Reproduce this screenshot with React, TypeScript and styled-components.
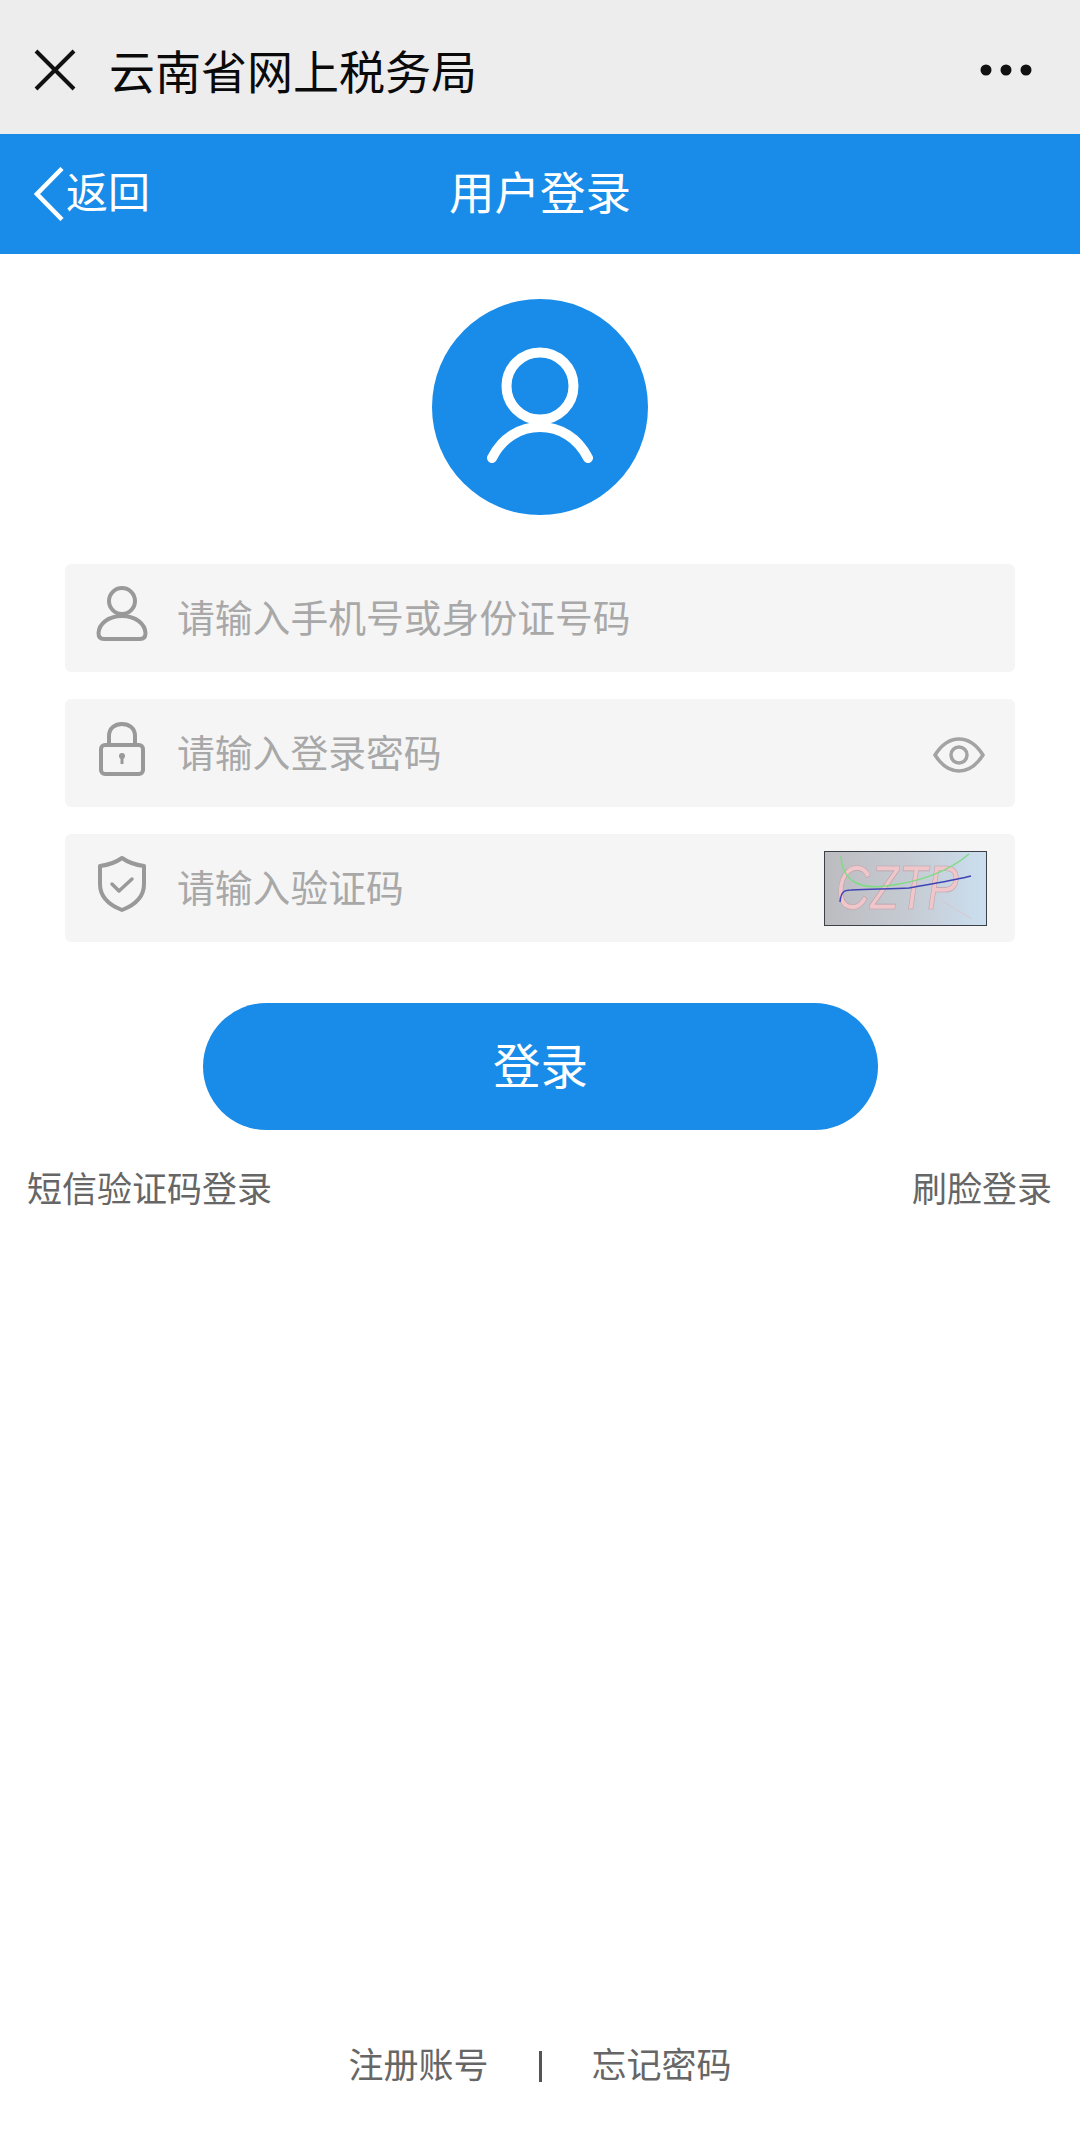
import React from "react";
import styled, { createGlobalStyle } from "styled-components";

const BLUE = "#188ce8";
const CJK = `"Noto Sans CJK SC", "Noto Sans", sans-serif`;

const GlobalStyle = createGlobalStyle`
  html, body {
    margin: 0;
    padding: 0;
    background: #fff;
    font-family: ${CJK};
  }
  * {
    box-sizing: border-box;
  }
`;

const Page = styled.div`
  width: 1080px;
  height: 2140px;
  display: flex;
  flex-direction: column;
  background: #fff;
`;

// ------------------------------ wechat bar ------------------------------
const WechatBar = styled.div`
  height: 134px;
  flex: none;
  background: #ededed;
  display: flex;
  align-items: center;
  padding: 6px 48px 0 34px;
  color: #0a0a0a;
`;

const WechatTitle = styled.div`
  flex: 1;
  margin-left: 33px;
  padding-bottom: 2px;
  font-size: 46px;
  line-height: 60px;
  font-weight: 400;
  white-space: nowrap;
`;

// ------------------------------ blue nav ------------------------------
const NavBar = styled.div`
  height: 120px;
  flex: none;
  background: ${BLUE};
  color: #fff;
  display: grid;
  grid-template-columns: 1fr auto 1fr;
  align-items: center;
  padding: 0 34px;
`;

const BackLink = styled.div`
  display: flex;
  align-items: center;
`;

const BackText = styled.span`
  margin-left: 2px;
  padding-bottom: 8px;
  font-size: 42px;
  line-height: 60px;
`;

const NavTitle = styled.div`
  padding-bottom: 8px;
  font-size: 45.5px;
  line-height: 60px;
`;

// ------------------------------ form ------------------------------
const Avatar = styled.div`
  width: 216px;
  height: 216px;
  margin: 45px auto 0;
  flex: none;
  border-radius: 50%;
  background: ${BLUE};
  display: flex;
  align-items: center;
  justify-content: center;
`;

const Form = styled.div`
  margin: 49px 65px 0;
  display: flex;
  flex-direction: column;
  gap: 27px;
`;

const Field = styled.div`
  height: 108px;
  display: flex;
  align-items: center;
  background: #f5f5f5;
  border-radius: 6px;
  padding: 0 28px 0 30px;
`;

const FieldIcon = styled.div`
  width: 54px;
  height: 68px;
  padding-bottom: 8px;
  flex: none;
  display: flex;
  align-items: center;
  justify-content: center;
`;

const Placeholder = styled.div`
  flex: 1;
  margin-left: 28px;
  padding-bottom: 5px;
  font-size: 37.8px;
  line-height: 50px;
  color: #a8a8a8;
  white-space: nowrap;
`;

const EyeIcon = styled.svg`
  flex: none;
  margin: 4px 2px 0 0;
`;

const Captcha = styled.svg`
  display: block;
  flex: none;
  width: 163px;
  height: 75px;
`;

const LoginButton = styled.div`
  width: 675px;
  height: 127px;
  margin: 61px 0 0 203px;
  padding-bottom: 6px;
  flex: none;
  border-radius: 64px;
  background: ${BLUE};
  color: #fff;
  font-size: 47.5px;
  display: flex;
  align-items: center;
  justify-content: center;
`;

const AltRow = styled.div`
  display: flex;
  justify-content: space-between;
  padding: 32px 28px 0 27px;
  font-size: 35px;
  line-height: 50px;
  color: #666;
`;

const Footer = styled.div`
  margin-top: auto;
  margin-bottom: 52px;
  display: flex;
  justify-content: center;
  align-items: center;
  font-size: 35px;
  line-height: 50px;
  color: #666;
`;

const Divider = styled.span`
  width: 3px;
  height: 31px;
  margin: 7px 50px 0 50px;
  background: #555;
`;

const App: React.FC = () => (
  <Page>
    <GlobalStyle />
    <WechatBar>
      <svg width="42" height="42" viewBox="0 0 42 42" fill="none" stroke="#111" strokeWidth="4">
        <path d="M2 2 L40 40 M40 2 L2 40" />
      </svg>
      <WechatTitle>云南省网上税务局</WechatTitle>
      <svg width="52" height="12" viewBox="0 0 52 12" fill="#111">
        <circle cx="6" cy="6" r="5.5" />
        <circle cx="26" cy="6" r="5.5" />
        <circle cx="46" cy="6" r="5.5" />
      </svg>
    </WechatBar>

    <NavBar>
      <BackLink>
        <svg width="30" height="54" viewBox="0 0 30 54" fill="none" stroke="#fff" strokeWidth="4.5">
          <path d="M28 1.500 L3 27 L28 52.500" />
        </svg>
        <BackText>返回</BackText>
      </BackLink>
      <NavTitle>用户登录</NavTitle>
      <div />
    </NavBar>

    <Avatar>
      <svg width="112" height="122" viewBox="0 0 112 122" fill="none" stroke="#fff" strokeWidth="10" strokeLinecap="round">
        <circle cx="56" cy="40" r="33.5" />
        <path d="M8 112 C18 92 36 81 56 81 C76 81 94 92 104 112" />
      </svg>
    </Avatar>

    <Form>
      <Field>
        <FieldIcon>
          <svg width="52" height="56" viewBox="0 0 52 56" fill="none" stroke="#999" strokeWidth="4">
            <circle cx="26" cy="15" r="13" />
            <path d="M26 30 C12 30 3 38 2.500 47 C2.500 51 4 53 8 53 L44 53 C48 53 49.500 51 49.500 47 C49 38 40 30 26 30 Z" />
          </svg>
        </FieldIcon>
        <Placeholder>请输入手机号或身份证号码</Placeholder>
      </Field>

      <Field>
        <FieldIcon>
          <svg width="46" height="54" viewBox="0 0 46 54" fill="none" stroke="#999" strokeWidth="4">
            <rect x="2" y="23" width="42" height="29" rx="4" />
            <path d="M10 23 V14 C10 6 16 2 23 2 C30 2 36 6 36 14 V23" />
            <circle cx="23" cy="34" r="3" fill="#999" stroke="none" />
            <path d="M23 34 V42" strokeWidth="3" />
          </svg>
        </FieldIcon>
        <Placeholder>请输入登录密码</Placeholder>
        <EyeIcon width="52" height="36" viewBox="0 0 52 36" fill="none" stroke="#a3a3a3" strokeWidth="3.500">
          <path d="M2 18 C9 7 17 2 26 2 C35 2 43 7 50 18 C43 29 35 34 26 34 C17 34 9 29 2 18 Z" />
          <circle cx="26" cy="18" r="8" />
        </EyeIcon>
      </Field>

      <Field>
        <FieldIcon>
          <svg width="50" height="56" viewBox="0 0 50 56" fill="none" stroke="#999" strokeWidth="4" strokeLinejoin="round">
            <path d="M25 2 C32 7 39 9 47 10 V28 C47 41 38 49 25 54 C12 49 3 41 3 28 V10 C11 9 18 7 25 2 Z" />
            <path d="M15 28 L22 35 L35 23" strokeWidth="3.500" strokeLinecap="round" />
          </svg>
        </FieldIcon>
        <Placeholder>请输入验证码</Placeholder>
        <Captcha viewBox="0 0 163 75">
          <defs>
            <linearGradient id="captchaBg" x1="0" y1="0" x2="1" y2="0">
              <stop offset="0" stopColor="#bcbcc0" />
              <stop offset="0.55" stopColor="#c6ccd4" />
              <stop offset="1" stopColor="#cbdff0" />
            </linearGradient>
          </defs>
          <rect x="0.5" y="0.5" width="162" height="74" fill="url(#captchaBg)" stroke="#3c4048" />
          <path d="M118 50 L148 68" stroke="#d8c6d0" strokeWidth="1" fill="none" />
          <text
            transform="translate(12 58) scale(1 1.33)"
            fontFamily="'Liberation Sans', sans-serif"
            fontSize="47"
            fontStyle="italic"
            fill="#efc6ca"
            stroke="#bda0aa"
            strokeWidth="0.500"
          >
            CZTP
          </text>
          <path d="M17 5 C18 32 38 38 62 35 C95 31 125 20 145 3" stroke="#7fdc84" strokeWidth="1.500" fill="none" />
          <path d="M16 51 C17 42 19 39 27 39 C50 38 70 38 85 37 C105 33 128 30 147 25" stroke="#3f45b5" strokeWidth="1.500" fill="none" />
        </Captcha>
      </Field>
    </Form>

    <LoginButton>登录</LoginButton>

    <AltRow>
      <span>短信验证码登录</span>
      <span>刷脸登录</span>
    </AltRow>

    <Footer>
      <span>注册账号</span>
      <Divider />
      <span>忘记密码</span>
    </Footer>
  </Page>
);

export default App;
